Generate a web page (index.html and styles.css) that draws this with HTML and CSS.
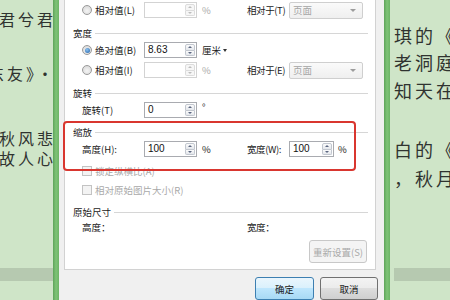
FILE: index.html
```html
<!DOCTYPE html>
<html lang="zh">
<head>
<meta charset="utf-8">
<title>图片格式</title>
<link rel="stylesheet" href="styles.css">
</head>
<body>
<div class="page">
  <div class="bg bg-left">
    <div class="ln l1">兮君兮君</div>
    <div class="ln l2">东友》·</div>
    <div class="ln l3">秋风悲</div>
    <div class="ln l4">故人心</div>
    <div class="band band-left"></div>
  </div>
  <div class="bar"></div>

  <div class="dialog">
    <div class="panel">
      <div class="row">
        <label class="lab opt"><span class="radio"></span>相对值(L)</label>
        <div class="num off"><span class="val"></span><span class="spin"><i class="up"></i><i class="dn"></i></span></div>
        <span class="unit dim">%</span>
        <span class="lab2">相对于(T)</span>
        <div class="combo"><span>页面</span><i class="caret"></i></div>
      </div>

      <div class="grp m9">宽度</div>
      <div class="row m3">
        <label class="lab opt"><span class="radio on"></span>绝对值(B)</label>
        <div class="num"><span class="val">8.63</span><span class="spin"><i class="up"></i><i class="dn"></i></span></div>
        <span class="unit">厘米<i class="tri"></i></span>
      </div>
      <div class="row m4">
        <label class="lab opt"><span class="radio"></span>相对值(I)</label>
        <div class="num off"><span class="val"></span><span class="spin"><i class="up"></i><i class="dn"></i></span></div>
        <span class="unit dim">%</span>
        <span class="lab2">相对于(E)</span>
        <div class="combo"><span>页面</span><i class="caret"></i></div>
      </div>

      <div class="grp m9">旋转</div>
      <div class="row m3">
        <span class="lab">旋转(T)</span>
        <div class="num"><span class="val">0</span><span class="spin"><i class="up"></i><i class="dn"></i></span></div>
        <span class="unit deg">°</span>
      </div>

      <div class="grp m8">缩放</div>
      <div class="row m3">
        <span class="lab">高度(H):</span>
        <div class="num"><span class="val">100</span><span class="spin"><i class="up"></i><i class="dn"></i></span></div>
        <span class="unit">%</span>
        <span class="lab2">宽度(W):</span>
        <div class="num short"><span class="val">100</span><span class="spin"><i class="up"></i><i class="dn"></i></span></div>
        <span class="unit2">%</span>
      </div>
      <div class="check m7"><span class="box"></span>锁定纵横比(A)</div>
      <div class="check m5"><span class="box"></span>相对原始图片大小(R)</div>

      <div class="grp m9">原始尺寸</div>
      <div class="row info m2">
        <span class="lab">高度：</span>
        <span class="gap"></span>
        <span class="lab2">宽度：</span>
      </div>
      <div class="reset-row">
        <button class="btn reset" disabled>重新设置(S)</button>
      </div>
    </div>

    <div class="actions">
      <button class="btn ok">确定</button>
      <button class="btn">取消</button>
    </div>
  </div>

  <div class="bar"></div>
  <div class="bg bg-right">
    <div class="ln r1">琪的《</div>
    <div class="ln r2">老洞庭</div>
    <div class="ln r3">知天在</div>
    <div class="ln r4">白的《</div>
    <div class="ln r5">，秋月</div>
    <div class="band band-right"></div>
  </div>

  <div class="highlight"></div>
</div>
</body>
</html>
```

FILE: styles.css
```css
* { box-sizing: border-box; margin: 0; padding: 0; }
html, body { width: 450px; height: 300px; overflow: hidden; }
body {
  background: #cfe5c8;
  font-family: "Noto Sans CJK SC", "Noto Sans", sans-serif;
}
.page {
  position: relative;
  display: flex;
  width: 450px;
  height: 300px;
}

/* background page with poem text */
.bg {
  display: flex;
  flex-direction: column;
  overflow: hidden;
  background: #cfe5c8;
  color: #2f3330;
  font-size: 16px;
}
.bg .ln {
  height: 20px;
  line-height: 20px;
  white-space: nowrap;
  letter-spacing: 3px;
}
.bg-left { width: 53px; flex: none; }
.bg-left .ln { display: flex; justify-content: flex-end; margin-right: -3px; }
.l1 { margin-top: 9px; }
.l2 { margin-top: 34px; }
.l3 { margin-top: 45px; }
.l4 { margin-top: 0; }
.band { height: 13px; background: #b6c9b0; flex: none; }
.band-left { margin-top: 100px; }

.bg-right { flex: 1; padding-left: 4px; font-size: 18px; }
.bg-right .ln { letter-spacing: 3px; }
.r1 { margin-top: 25px; }
.r2 { margin-top: 7px; }
.r3 { margin-top: 8px; }
.r4 { margin-top: 39px; }
.r5 { margin-top: 9px; }
.band-right { margin-top: 80px; }

.bar {
  width: 6px;
  flex: none;
  background: linear-gradient(90deg, #5ea45a, #7fc377 50%, #6cb466);
}

/* dialog */
.dialog {
  width: 325px;
  flex: none;
  background: #f0f0f0;
  padding-left: 5px;
  display: flex;
  flex-direction: column;
  font-size: 9.5px;
  color: #1b1b1b;
}
.panel {
  width: 312px;
  height: 272px;
  background: #fff;
  border: 1px solid #d2d2d2;
  border-top: none;
  padding-top: 2px;
  display: flex;
  flex-direction: column;
}
.m2 { margin-top: 2px; }
.m3 { margin-top: 3px; }
.m4 { margin-top: 4px; }
.m5 { margin-top: 5px; }
.m7 { margin-top: 7px; }
.m8 { margin-top: 8px; }
.m9 { margin-top: 9px; }

.grp {
  display: flex;
  align-items: center;
  height: 12px;
  padding: 0 7px 0 8px;
  line-height: 12px;
  color: #1b1b1b;
}
.grp::after {
  content: "";
  flex: 1;
  height: 1px;
  margin-left: 3px;
  background: #d6d6d6;
}

.row {
  display: flex;
  align-items: center;
  height: 16px;
  padding-left: 17px;
  line-height: 16px;
  white-space: nowrap;
}
.lab { width: 62px; flex: none; display: flex; align-items: center; }
.opt { gap: 3px; }
.dim { color: #a9a9a9; }

.radio {
  width: 10px;
  height: 10px;
  border-radius: 50%;
  border: 1px solid #9a9a9a;
  background: radial-gradient(circle at 50% 60%, #f4f4f4, #d4d4d4);
  display: flex;
  align-items: center;
  justify-content: center;
  flex: none;
}
.radio.on::after {
  content: "";
  width: 5px;
  height: 5px;
  border-radius: 50%;
  background: radial-gradient(circle at 40% 35%, #8ec3f0, #1f5fa8);
}

.num {
  width: 53px;
  height: 16px;
  flex: none;
  border: 1px solid #a9abb0;
  background: #fff;
  display: flex;
  align-items: stretch;
}
.num.short { width: 45px; }
.num.off { border-color: #d3d3d3; }
.val {
  flex: 1;
  padding-left: 3px;
  line-height: 14px;
  font-family: "Liberation Sans", Arial, sans-serif;
  font-size: 10px;
  color: #111;
}
.spin {
  width: 10px;
  margin: 1px 1px 1px 0;
  display: flex;
  flex-direction: column;
}
.spin i {
  flex: 1;
  border: 1px solid #c2c7cf;
  background: linear-gradient(#fbfbfb, #e4e7ec);
  display: flex;
  align-items: center;
  justify-content: center;
}
.spin i.up { border-radius: 2px 2px 0 0; }
.spin i.dn { border-radius: 0 0 2px 2px; border-top: none; }
.spin i.up::after,
.spin i.dn::after {
  content: "";
  border-left: 2px solid transparent;
  border-right: 2px solid transparent;
}
.spin i.up::after { border-bottom: 2px solid #5b6680; }
.spin i.dn::after { border-top: 2px solid #5b6680; }
.num.off .spin i { border-color: #dcdcdc; background: #f6f6f6; }
.num.off .spin i.dn { border-top: none; }
.num.off .spin i.up::after { border-bottom-color: #bdbdbd; }
.num.off .spin i.dn::after { border-top-color: #bdbdbd; }

.unit { width: 50px; flex: none; padding-left: 5px; display: flex; align-items: center; }
.unit.deg { align-items: flex-start; line-height: 10px; height: 16px; }
.tri {
  margin-left: 2px;
  border-left: 2px solid transparent;
  border-right: 2px solid transparent;
  border-top: 3px solid #333;
}
.unit2 { padding-left: 4px; }
.lab2 { width: 42px; flex: none; letter-spacing: -0.4px; }

.combo {
  width: 74px;
  height: 17px;
  flex: none;
  border: 1px solid #cfcfcf;
  border-radius: 2px;
  background: linear-gradient(#fafafa, #efefef);
  color: #a5a5a5;
  display: flex;
  align-items: center;
  justify-content: space-between;
  padding: 0 6px 0 3px;
}
.caret {
  border-left: 3px solid transparent;
  border-right: 3px solid transparent;
  border-top: 3px solid #9c9c9c;
}

.check {
  display: flex;
  align-items: center;
  gap: 3px;
  height: 14px;
  padding-left: 17px;
  color: #a9a9a9;
  white-space: nowrap;
}
.box {
  width: 10px;
  height: 10px;
  border: 1px solid #c3c3c3;
  background: #f3f3f3;
  flex: none;
}

.info { height: 14px; }
.gap { width: 103px; flex: none; }

.reset-row {
  display: flex;
  justify-content: flex-end;
  padding-right: 8px;
  margin-top: 6px;
}

.btn {
  font-family: "Noto Sans CJK SC", "Noto Sans", sans-serif;
  font-size: 9.5px;
  height: 23px;
  width: 58px;
  border: 1px solid #707070;
  border-radius: 3px;
  color: #1b1b1b;
  background: linear-gradient(#f3f3f3, #ebebeb 50%, #dddddd 50%, #cfcfcf);
}
.btn.reset {
  color: #a9a9a9;
  border-color: #c8c8c8;
  background: #f4f4f4;
}
.btn.ok {
  width: 59px;
  border-color: #3c7fb1;
  background: linear-gradient(#eaf6fd, #d9f0fc 50%, #bee6fd 50%, #a7d9f5);
}
.actions {
  display: flex;
  justify-content: flex-end;
  gap: 6px;
  padding-right: 6px;
  margin-top: 7px;
}

/* red annotation frame drawn over the dialog */
.highlight {
  position: absolute;
  left: 63px;
  top: 121px;
  width: 293px;
  height: 50px;
  border: 2px solid #d9362f;
  border-radius: 4px;
  pointer-events: none;
}
```
